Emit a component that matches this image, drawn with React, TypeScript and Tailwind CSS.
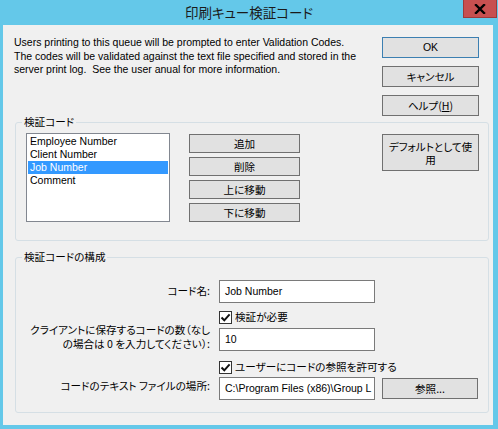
import React from "react";

function Btn({ className = "", children }: { className?: string; children: React.ReactNode }) {
  return (
    <div
      className={
        "flex items-center justify-center bg-[#e1e1e1] border border-[#707070] text-[10.6px] leading-[13px] text-black text-center " +
        className
      }
    >
      {children}
    </div>
  );
}

function Check({ label }: { label: string }) {
  return (
    <div className="flex items-center h-[16px] pl-[203px]">
      <div className="w-[13px] h-[13px] bg-white border border-[#333333] flex items-center justify-center">
        <svg width="11" height="11" viewBox="0 0 11 11">
          <path d="M1.5 5.5 L4.3 8.3 L9.6 2.4" fill="none" stroke="#111" strokeWidth="2" />
        </svg>
      </div>
      <span className="ml-[3px] text-[10.6px] leading-[16px]">{label}</span>
    </div>
  );
}

const LAT = "font-['Liberation_Sans',sans-serif] text-[10.5px]";

export default function App() {
  return (
    <div className="w-[498px] h-[429px] bg-[#64c8e9] flex flex-col overflow-hidden font-['Noto_Sans_CJK_JP',sans-serif] [font-feature-settings:'palt'] text-[10.6px] text-black">
      {/* title bar */}
      <div className="relative h-[25px] shrink-0 flex items-center justify-center">
        <span className="text-[13.5px] text-[#1a1a1a] leading-none">印刷キュー検証コード</span>
        <div className="absolute right-[1px] top-0 w-[34px] h-[18px] bg-[#c75050] border border-t-0 border-[#9e3a3a] flex items-center justify-center">
          <svg width="12" height="10" viewBox="0 0 12 10">
            <path d="M2 1 L10 9 M10 1 L2 9" stroke="#000" strokeWidth="2.4" strokeLinecap="square" />
          </svg>
        </div>
      </div>

      {/* client area */}
      <div className="ml-[3px] w-[490px] h-[400px] bg-[#f0f0f0] flex flex-col">
        <div className="flex h-[91px]">
          <p className={"w-[379px] pl-[11px] pt-[11px] leading-[13.5px] whitespace-nowrap " + LAT}>
            Users printing to this queue will be prompted to enter Validation Codes.
            <br />
            The codes will be validated against the text file specified and stored in the
            <br />
            server print log.&nbsp; See the user anual for more information.
          </p>
          <div className="w-[97px] pt-[12px] flex flex-col gap-[8px]">
            <Btn className="h-[21px] !border-[#3c7fb1]">
              <span className={LAT}>OK</span>
            </Btn>
            <Btn className="h-[21px]">キャンセル</Btn>
            <Btn className="h-[21px]">
              <span>
                ヘルプ(<span className="underline">H</span>)
              </span>
            </Btn>
          </div>
        </div>

        {/* group 1 */}
        <div className="relative mt-[6px] ml-[12px] w-[474px] h-[119px] border border-[#d5dfe5] rounded-[3px] flex pt-[10px] pl-[10px]">
          <span className="absolute -top-[9px] left-[6px] px-[2px] bg-[#f0f0f0] leading-[16px]">検証コード</span>
          <div className={"w-[144px] h-[89px] bg-white border border-[#828790] p-[1px] " + LAT}>
            <div className="h-[13px] leading-[13px] pl-[2px]">Employee Number</div>
            <div className="h-[13px] leading-[13px] pl-[2px]">Client Number</div>
            <div className="h-[13px] leading-[13px] pl-[2px] bg-[#3399ff] text-white">Job Number</div>
            <div className="h-[13px] leading-[13px] pl-[2px]">Comment</div>
          </div>
          <div className="ml-[19px] mt-[1px] w-[111px] flex flex-col gap-[4px]">
            <Btn className="h-[19px]">追加</Btn>
            <Btn className="h-[19px]">削除</Btn>
            <Btn className="h-[19px]">上に移動</Btn>
            <Btn className="h-[19px]">下に移動</Btn>
          </div>
          <div className="ml-[82px] mt-[1px]">
            <Btn className="w-[97px] h-[37px]">
              デフォルトとして使
              <br />用
            </Btn>
          </div>
        </div>

        {/* group 2 */}
        <div className="relative mt-[16px] ml-[12px] w-[474px] h-[156px] border border-[#d5dfe5] rounded-[3px] flex flex-col pt-[22px]">
          <span className="absolute -top-[9px] left-[6px] px-[2px] bg-[#f0f0f0] leading-[16px]">検証コードの構成</span>

          <div className="flex items-center">
            <div className="w-[194px] text-right -mt-[2px] whitespace-nowrap">コード名:</div>
            <div className={"ml-[9px] w-[156px] h-[23px] bg-white border border-[#7a7a7a] flex items-center pl-[5px] " + LAT}>Job Number</div>
          </div>

          <div className="mt-[6px]">
            <Check label="検証が必要" />
          </div>

          <div className="mt-[3px] flex items-center">
            <div className="w-[194px] text-right leading-[14px] -mt-[6px] whitespace-nowrap">
              クライアントに保存するコードの数（なし
              <br />
              の場合は 0 を入力してください）:
            </div>
            <div className={"ml-[9px] w-[156px] h-[23px] bg-white border border-[#7a7a7a] flex items-center pl-[5px] " + LAT}>10</div>
          </div>

          <div className="mt-[8px]">
            <Check label="ユーザーにコードの参照を許可する" />
          </div>

          <div className="mt-[2px] flex items-center">
            <div className="w-[194px] text-right -mt-[6px] whitespace-nowrap">コードのテキスト ファイルの場所:</div>
            <div className={"ml-[9px] w-[156px] h-[23px] bg-white border border-[#7a7a7a] flex items-center pl-[5px] overflow-hidden whitespace-nowrap " + LAT}>
              C:\Program Files (x86)\Group L
            </div>
            <Btn className="ml-[7px] w-[96px] h-[21px]">参照...</Btn>
          </div>
        </div>
      </div>
    </div>
  );
}
